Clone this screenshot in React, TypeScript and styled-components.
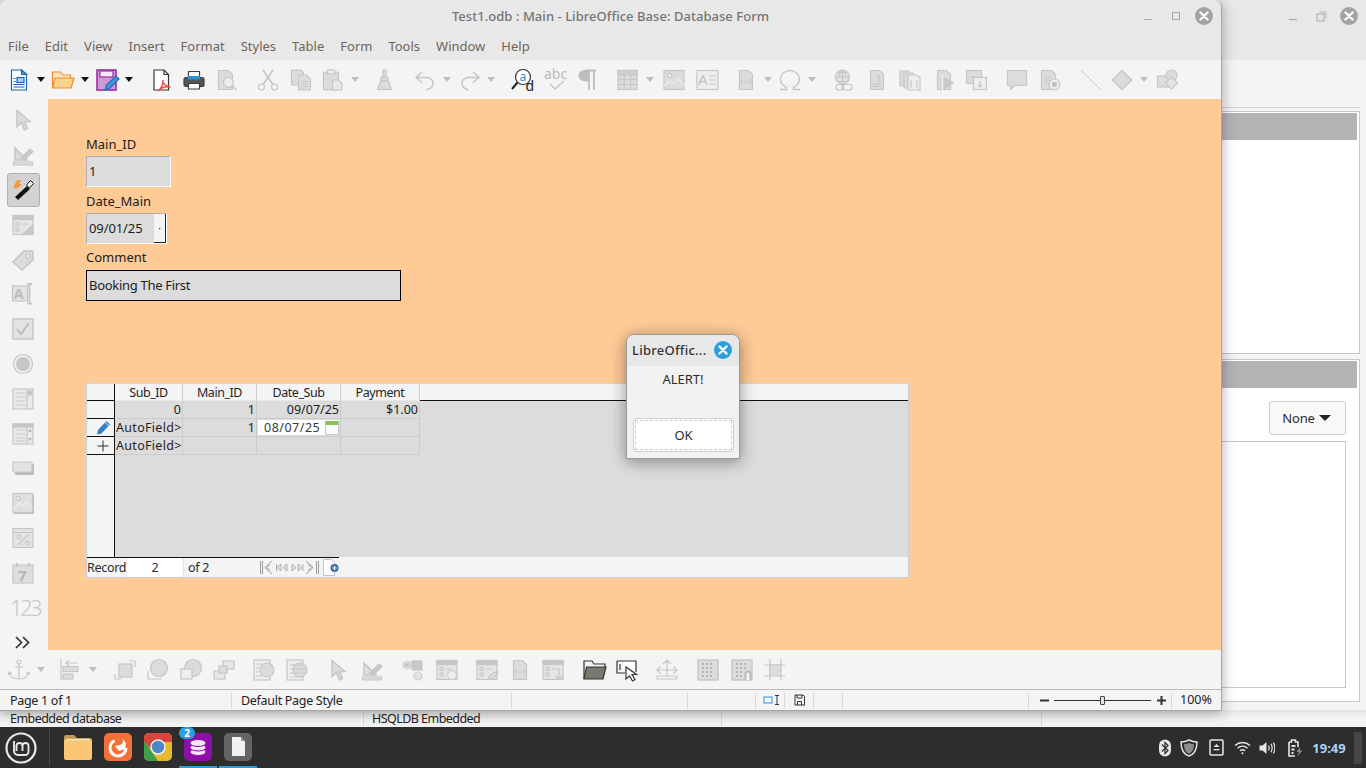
import React from 'react';
import styled, { createGlobalStyle } from 'styled-components';

const UI_FONT = '"Noto Sans", "Open Sans", sans-serif';

const GlobalStyle = createGlobalStyle`
  html, body { margin: 0; height: 100%; overflow: hidden; background: #2d2d2d; }
  body { font: 13px/18px ${UI_FONT}; color: #2b2b2b; }
  * { box-sizing: border-box; }
`;

const Screen = styled.div`
  width: 1366px;
  height: 768px;
  display: flex;
  flex-direction: column;
`;

const Desktop = styled.div`
  position: relative;
  height: 727px;
  flex: none;
`;

/* ---------- windows ---------- */

const BackWindow = styled.div`
  position: absolute;
  inset: 0;
  display: flex;
  flex-direction: column;
  background: #f4f4f4;
`;

const BackHead = styled.div`
  height: 60px;
  flex: none;
  background: #e8e8e8;
  display: flex;
  justify-content: flex-end;
  padding: 7px 8px 0 0;
`;

const BackBody = styled.div`
  flex: 1;
  display: flex;
  justify-content: flex-end;
  padding: 47px 6px 8px 0;
`;

const Sidebar = styled.div`
  width: 300px;
  display: flex;
  flex-direction: column;
  border-top: 1px solid #d0d0d0;
  padding-top: 3px;
  gap: 5px;
`;

const SidePanel = styled.div<{ $grow?: boolean }>`
  border: 1px solid #c8c8c8;
  padding: 1px 2px 2px;
  background: #fff;
  display: flex;
  flex-direction: column;
  height: ${p => (p.$grow ? '343px' : '243px')};
`;

const SideHeader = styled.div`
  height: 27px;
  flex: none;
  background: #b3b3b3;
`;

const NoneRow = styled.div`
  display: flex;
  justify-content: flex-end;
  padding: 13px 11px 6px 0;
`;

const NoneButton = styled.div`
  width: 77px;
  height: 34px;
  border: 1px solid #ccc;
  border-radius: 3px;
  background: #f8f8f8;
  display: flex;
  align-items: center;
  justify-content: center;
  gap: 4px;
  color: #2c2c2c;
  padding-right: 2px;
  padding-bottom: 1px;
  letter-spacing: -0.1px;
`;

const NoneBox = styled.div`
  height: 247px;
  margin-right: 11px;
  border: 1px solid #c8c8c8;
`;

const StatusRow = styled.div<{ $back?: boolean }>`
  height: ${p => (p.$back ? '17px' : '21px')};
  flex: none;
  display: flex;
  align-items: center;
  font-size: 12.5px;
  letter-spacing: ${p => (p.$back ? '-0.55px' : '-0.3px')};
  background: ${p => (p.$back ? 'linear-gradient(#e4e4e4, #f4f4f4 9px)' : '#f4f4f4')};
  border-top: ${p => (p.$back ? 'none' : '1px solid #bcbcbc')};
  color: #222;
`;

const StatusCell = styled.div<{ $w: number; $pl?: number }>`
  width: ${p => p.$w}px;
  height: 15px;
  flex: none;
  display: flex;
  align-items: center;
  padding-left: ${p => p.$pl ?? 9}px;
  border-right: 1px solid #d8d8d8;
  line-height: 15px;
  white-space: nowrap;
`;

const MainWindow = styled.div`
  position: absolute;
  left: 0;
  top: 0;
  width: 1222px;
  height: 711px;
  display: flex;
  flex-direction: column;
  border-radius: 8px 8px 0 0;
  border-right: 1px solid #a6a6a6;
  border-bottom: 1px solid #a6a6a6;
  background: #f4f4f4;
  box-shadow: 0 2px 14px rgba(0, 0, 0, 0.32);
  overflow: hidden;
`;

const TitleBar = styled.div`
  height: 34px;
  flex: none;
  background: #e8e8e8;
  display: flex;
  align-items: center;
  justify-content: center;
  position: relative;
  font-weight: 500;
  color: #757575;
  padding-bottom: 2px;
  letter-spacing: 0.04px;
`;

const WindowControls = styled.div`
  position: absolute;
  right: 8px;
  top: 7px;
  display: flex;
  align-items: center;
`;

const ControlBox = styled.span`
  width: 28px;
  height: 18px;
  display: flex;
  align-items: center;
  justify-content: center;
`;

const CloseDot = styled.span<{ $blue?: boolean }>`
  width: 18px;
  height: 18px;
  margin-left: 5px;
  border-radius: 50%;
  background: ${p => (p.$blue ? '#2a9fe0' : '#a3a3a3')};
  display: flex;
  align-items: center;
  justify-content: center;
`;

const MenuBar = styled.div`
  height: 26px;
  flex: none;
  background: #e8e8e8;
  display: flex;
  align-items: center;
  padding: 0 0 2px 8px;
  gap: 16px;
  color: #6f6457;
  font-size: 13px;
`;

const ToolRow = styled.div<{ $h: number }>`
  height: ${p => p.$h}px;
  flex: none;
  background: #f4f4f4;
  display: flex;
  align-items: center;
`;

const Tool = styled.span<{ $ml: number }>`
  width: 22px;
  height: 22px;
  flex: none;
  margin-left: ${p => p.$ml}px;
  display: flex;
  align-items: center;
  justify-content: center;
`;

const Caret = styled.span<{ $on?: boolean }>`
  width: 0;
  height: 0;
  border-left: 4.5px solid transparent;
  border-right: 4.5px solid transparent;
  border-top: 5px solid ${p => (p.$on ? '#111' : '#bdbdbd')};
`;

const NoneCaret = styled(Caret)`
  border-left-width: 6px;
  border-right-width: 6px;
  border-top-width: 6px;
  border-top-color: #222;
`;

const Icon = styled.svg`
  width: 22px;
  height: 22px;
  fill: none;
  stroke: #c6c6c6;
  stroke-width: 1.2;
  overflow: visible;
  flex: none;
`;

const Work = styled.div`
  flex: 1;
  min-height: 0;
  display: flex;
`;

const LeftBar = styled.div`
  width: 48px;
  flex: none;
  background: #f4f4f4;
  display: flex;
  flex-direction: column;
  align-items: center;
  padding: 4px 2px 0 0;
`;

const SideTool = styled.span<{ $active?: boolean }>`
  width: 33px;
  height: 34.8px;
  flex: none;
  display: flex;
  align-items: center;
  justify-content: center;
  border-radius: 3px;
  border: 1px solid ${p => (p.$active ? '#b0b0b0' : 'transparent')};
  background: ${p => (p.$active ? '#d2d2d2' : 'transparent')};
`;

/* ---------- form ---------- */

const FormCanvas = styled.div`
  flex: 1;
  background: #feca96;
  padding: 36px 0 0 38px;
  display: flex;
  flex-direction: column;
  align-items: flex-start;
  color: #1c1c1c;
`;

const FieldLabel = styled.div<{ $up?: boolean }>`
  height: 18px;
  margin: ${p => (p.$up ? '4px 0 4px' : '5px 0 3px')};
  line-height: 18px;

  &:first-child {
    margin-top: 0;
  }
`;

const Field = styled.div<{ $w: number; $black?: boolean }>`
  width: ${p => p.$w}px;
  height: 31px;
  background: #dcdcdc;
  display: flex;
  align-items: center;
  padding: 0 0 2px 2px;
  border: 1px solid;
  border-color: ${p => (p.$black ? '#000' : '#b0b0b0 #fff #fff #b0b0b0')};
  letter-spacing: ${p => (p.$black ? '-0.3px' : '-0.1px')};
  position: relative;
`;

const SpinButton = styled.span`
  position: absolute;
  right: 0;
  top: 0;
  bottom: 0;
  width: 12px;
  background: #f4f4f4;
  border-right: 1px solid #222;
  border-bottom: 1px solid #222;
  display: flex;
  align-items: center;
  justify-content: center;
  font-size: 10px;
`;

const GridBox = styled.div`
  margin-top: 82px;
  width: 823px;
  height: 195px;
  display: flex;
  flex-direction: column;
  border: 1px solid #c6cedc;
  border-top-color: #d8d8d8;
  background: #f4f4f4;
  font-size: 12.5px;
`;

const GridMain = styled.div`
  height: 173px;
  flex: none;
  display: flex;
`;

const RowHeads = styled.div`
  width: 28px;
  flex: none;
  border-right: 1px solid #111;
  background: #f4f4f4;
`;

const RowHead = styled.div<{ $h: number }>`
  height: ${p => p.$h}px;
  border-bottom: 1px solid #111;
  display: flex;
  align-items: center;
  justify-content: flex-end;
  padding-right: 4px;
`;

const GridData = styled.div`
  flex: 1;
  display: flex;
  flex-direction: column;
  background: #dcdcdc;
`;

const DataRow = styled.div<{ $head?: boolean }>`
  display: flex;
  height: ${p => (p.$head ? 17 : 18)}px;
  flex: none;
`;

const HeadFill = styled.div`
  flex: 1;
  margin-top: auto;
  height: 17px;
  background: #f4f4f4;
  border-bottom: 1px solid #111;
`;

const Cell = styled.div<{ $w: number; $head?: boolean; $left?: boolean }>`
  width: ${p => p.$w}px;
  flex: none;
  display: flex;
  align-items: center;
  justify-content: ${p => (p.$head ? 'center' : p.$left ? 'flex-start' : 'flex-end')};
  padding: 0 1px;
  border-right: 1px solid #cbcbcb;
  border-bottom: 1px solid ${p => (p.$head ? '#e8e8e8' : '#cbcbcb')};
  background: ${p => (p.$head ? '#f4f4f4' : 'transparent')};
  color: #1f1f1f;
  line-height: 17px;
  white-space: nowrap;
  letter-spacing: ${p => (p.$head ? '-0.45px' : p.$left ? '0.3px' : '0')};
`;

const EditCell = styled.div`
  flex: 1;
  align-self: stretch;
  margin: 1px 0;
  background: #fff;
  display: flex;
  align-items: center;
  justify-content: space-between;
  padding: 0 0 0 6px;
  color: #3a3a3a;
  letter-spacing: 0.5px;
`;

const CalendarMark = styled.span`
  width: 14px;
  height: 14px;
  border: 1px solid #c9c9c9;
  border-top: 4px solid #8cc152;
  border-radius: 1px;
  background: #fafafa;
`;

const RecordBar = styled.div`
  flex: 1;
  display: flex;
  background: #f4f4f4;
  color: #2b2b2b;
`;

const RecordLeft = styled.div`
  width: 252px;
  flex: none;
  display: flex;
  align-items: center;
  border-top: 1px solid #111;
`;

const RecordText = styled.span<{ $w: number }>`
  width: ${p => p.$w}px;
  flex: none;
  padding-left: ${p => (p.$w > 50 ? 3 : 0)}px;
  line-height: 18px;
  letter-spacing: -0.3px;
`;

const RecordInput = styled.span`
  width: 57px;
  flex: none;
  height: 19px;
  background: #fff;
  text-align: center;
  border-right: 1px solid #e2e2e2;
  margin-right: 1px;
  line-height: 19px;
`;

/* ---------- dialog ---------- */

const Dialog = styled.div`
  position: absolute;
  left: 626px;
  top: 334px;
  width: 114px;
  height: 125px;
  border-radius: 8px 8px 0 0;
  border: 1px solid #9a9a9a;
  background: #f2f2f2;
  box-shadow: 0 3px 16px rgba(0, 0, 0, 0.4);
  display: flex;
  flex-direction: column;
  overflow: hidden;
`;

const DialogHead = styled.div`
  height: 31px;
  flex: none;
  background: #e8e8e8;
  display: flex;
  align-items: center;
  justify-content: space-between;
  padding: 0 7px 1px 5px;
  font-weight: 500;
  color: #333;
  letter-spacing: 0.25px;
`;

const DialogText = styled.div`
  text-align: center;
  padding-top: 4px;
  height: 52px;
  color: #2c2c2c;
`;

const OkButton = styled.div`
  width: 101px;
  height: 34px;
  margin-left: 6px;
  background: #fff;
  border: 1px solid #cfcfcf;
  border-radius: 3px;
  padding: 1px;
`;

const OkInner = styled.div`
  height: 100%;
  border: 1px dashed #c8c8c8;
  display: flex;
  align-items: center;
  justify-content: center;
  color: #2c2c2c;
  padding-bottom: 1px;
`;

/* ---------- zoom slider ---------- */

const ZoomTrack = styled.span`
  width: 97px;
  height: 1px;
  background: #333;
  position: relative;
  margin: 0 6px 0 5px;
  flex: none;
`;

const ZoomThumb = styled.span`
  position: absolute;
  left: 46px;
  top: -4px;
  width: 5px;
  height: 9px;
  background: #e4e4e4;
  border: 1px solid #444;
  border-radius: 1px;
`;

const ZoomCell = styled.div`
  width: 143px;
  height: 15px;
  flex: none;
  display: flex;
  align-items: center;
  padding-left: 11px;
  border-right: 1px solid #d8d8d8;
`;

const ZoomValue = styled.div`
  flex: 1;
  padding-left: 8px;
  color: #223;
  letter-spacing: 0;
`;

/* ---------- taskbar ---------- */

const Taskbar = styled.div`
  height: 41px;
  flex: none;
  background: #2d2d2d;
  display: flex;
  align-items: center;
  position: relative;
`;

const MintButton = styled.div`
  width: 50px;
  height: 37px;
  flex: none;
  display: flex;
  align-items: center;
  justify-content: center;
  padding-right: 8px;
  border-right: 1px solid #484848;
`;

const Launchers = styled.div`
  display: flex;
  height: 41px;
  margin-left: 8px;
`;

const Launcher = styled.div<{ $active?: boolean }>`
  width: 40px;
  height: 41px;
  position: relative;
  display: flex;
  align-items: center;
  justify-content: center;
  padding-bottom: 2px;

  &::after {
    content: '';
    position: absolute;
    left: 1px;
    right: 1px;
    bottom: 0;
    height: 2px;
    background: ${p => (p.$active ? '#2a9fd6' : 'transparent')};
  }
`;

const Badge = styled.span`
  position: absolute;
  left: 1px;
  top: 0;
  width: 16px;
  height: 12px;
  border-radius: 6px;
  background: #2a9fe0;
  color: #fff;
  font-size: 10px;
  font-weight: 700;
  line-height: 12px;
  text-align: center;
`;

const Tray = styled.div`
  margin-left: auto;
  display: flex;
  align-items: center;
  height: 41px;
  padding-right: 4px;
`;

const TrayIcon = styled.span<{ $w: number }>`
  width: ${p => p.$w}px;
  flex: none;
  display: flex;
  justify-content: center;
`;

const Clock = styled.span`
  width: 40px;
  color: #a9d3f2;
  font-weight: 700;
  font-size: 13px;
  text-align: center;
`;

const TrayEdge = styled.span`
  width: 8px;
  height: 32px;
  margin-left: 5px;
  background: #454545;
`;

/* ---------- icons ---------- */

const F = '#dcdcdc';

const docPath = 'M4.5 1.5h9l4 4v15h-13z';

const icons: Record<string, React.ReactNode> = {
  newDoc: (
    <g stroke="#1a66b3">
      <path d="M3.5 1h10l5 4.5V21h-15z" fill="#fff" />
      <path d="M13.5 1l5 4.5h-5z" fill="#5aa0e0" />
      <rect x="9" y="8.5" width="7" height="5" fill="#a8d0f0" />
      <path d="M5.500 9.500h2M5.500 12.500h2M5.500 15.500h11M5.500 18h11" />
    </g>
  ),
  open: (
    <g stroke="#f0882a">
      <path d="M0.500 19V3h8l2 3h8v4" fill="#fde7c6" />
      <path d="M0.500 19l2.500-10h19l-3 10z" fill="#fbd38d" />
    </g>
  ),
  save: (
    <g>
      <rect x="1" y="1" width="19" height="20" fill="#cc9ad6" stroke="#9c2fa0" strokeWidth="1.600" />
      <rect x="4" y="2" width="13" height="6" fill="#f6ecf7" stroke="#9c2fa0" />
      <path d="M9 21l1.500-5L20 7l3 3-9.500 9.500z" fill="#4a90d9" stroke="#1f6fb5" />
    </g>
  ),
  pdf: (
    <g>
      <path d="M4 1h10l4.500 4.500V21H4z" fill="#fff" stroke="#333" />
      <path d="M14 1v4.500h4.500" stroke="#333" />
      <path d="M8 22c4-3 5.500-8 5-11-.8 3 2 6 7.500 7-4-.6-9 .5-12.500 4z" stroke="#ef4f45" strokeWidth="1.500" />
    </g>
  ),
  print: (
    <g stroke="#3d3d3d">
      <path d="M5.500 2.500h11V9h-11z" fill="#fff" />
      <rect x="1" y="8.500" width="20" height="9" rx="2" fill="#555" />
      <rect x="5" y="7" width="12" height="3.500" fill="#2f8fd0" stroke="none" />
      <path d="M5.500 14.500h11v5.500h-11z" fill="#fff" />
    </g>
  ),
  preview: (
    <g>
      <path d="M2.500 1.500h10l4 4v15h-14z" fill={F} />
      <circle cx="12.500" cy="13.500" r="5" fill="#eee" />
      <path d="M16 17l5 4.500" />
    </g>
  ),
  cut: (
    <g>
      <circle cx="4.500" cy="18" r="3" />
      <circle cx="17.500" cy="18" r="3" />
      <path d="M6 15.500L16 1M16 15.500L6 1" strokeWidth="1.700" />
    </g>
  ),
  copy: (
    <g>
      <path d="M1.500 1h9l3 3v12h-12z" fill={F} />
      <path d="M8.500 6h8l4 4v11h-12z" fill={F} />
      <path d="M11 12.500h7M11 15h7M11 17.500h7" />
    </g>
  ),
  paste: (
    <g>
      <rect x="1.500" y="3" width="15" height="18" rx="1" fill={F} />
      <rect x="5.500" y="1" width="7" height="4" fill="#eee" />
      <path d="M10.500 11h6l3.500 3.500V21h-9.500z" fill="#e8e8e8" />
    </g>
  ),
  brush: (
    <g>
      <path d="M9 1h3v7H9z" fill={F} />
      <path d="M7 8h7v4H7z" fill={F} />
      <path d="M6.500 12h8l3 8.500h-14z" fill={F} />
    </g>
  ),
  undo: <path d="M8 3L2 8.500l6 5M2 8.500h10c5 0 8 3.500 7 7-.7 2.500-3 4.500-6.500 5.500" strokeWidth="1.500" />,
  redo: <path d="M14 3l6 5.500-6 5M20 8.500H10c-5 0-8 3.500-7 7 .7 2.500 3 4.500 6.500 5.500" strokeWidth="1.500" />,
  find: (
    <g>
      <circle cx="11" cy="8" r="7.500" stroke="#333" fill="#fff" />
      <path d="M5.500 13.500L0 20" stroke="#222" strokeWidth="2" />
      <text x="7.500" y="11.500" fontSize="12" fill="#2a94dc" stroke="none" fontFamily={UI_FONT}>a</text>
      <text x="13.500" y="22" fontSize="14" fill="#222" stroke="none" fontFamily={UI_FONT}>d</text>
    </g>
  ),
  spell: (
    <g>
      <text x="-1" y="10" fontSize="14" fill="#bcbcbc" stroke="none" fontFamily={UI_FONT}>abc</text>
      <path d="M5 15l5 5 9-8" strokeWidth="1.500" />
    </g>
  ),
  pilcrow: (
    <g stroke="#bdbdbd">
      <path d="M11 1.500C4 1.500 2 3.500 2 6.500s3 5.500 9 5.500z" fill="#bdbdbd" />
      <path d="M8 1.500h11M12 1.500V21M17 1.500V21" strokeWidth="1.800" />
    </g>
  ),
  table: (
    <g>
      <rect x="1" y="1.500" width="19" height="19" fill={F} />
      <rect x="1" y="1.500" width="19" height="4.500" fill="#cfcfcf" />
      <path d="M7.300 6v14.500M13.600 6v14.500M1 10.500h19M1 15.500h19" />
    </g>
  ),
  image: (
    <g>
      <rect x="1" y="1.500" width="20" height="19" fill={F} />
      <circle cx="6.500" cy="6.500" r="2.200" fill="#eee" />
      <path d="M1 17l5.500-5 4 3 4-5 6.500 6" stroke="#eee" />
    </g>
  ),
  textbox: (
    <g>
      <rect x="1" y="1.500" width="21" height="19" fill="#eee" />
      <text x="2" y="16" fontSize="15" fill="#c2c2c2" stroke="none" fontFamily={UI_FONT}>A</text>
      <path d="M13 7h7M13 11h7M13 15h7" />
    </g>
  ),
  field: (
    <g>
      <path d={docPath} fill={F} />
      <path d="M7 10c-1 1.500-1 4 0 5.500M15 10c1 1.500 1 4 0 5.500M8.500 13h5" />
    </g>
  ),
  omega: <path d="M1 20.500h6.500v-2C3.500 16.500 1.500 13.500 1.500 10a9.500 8.500 0 0 1 19 0c0 3.500-2 6.500-6 8.500v2H21" strokeWidth="1.400" />,
  link: (
    <g>
      <circle cx="10.500" cy="8" r="7" fill="#e0e0e0" />
      <path d="M3.500 8h14M10.500 1v14M5 3.500h11M5 12.500h11M7 8c0-3 1.500-5 3.500-7M14 8c0-3-1.500-5-3.500-7" />
      <rect x="4" y="15.500" width="8" height="5.500" rx="2.700" fill="#f4f4f4" />
      <rect x="10" y="15.500" width="10" height="5.500" rx="2.700" />
    </g>
  ),
  footnote: (
    <g>
      <path d={docPath} fill={F} />
      <text x="10" y="13" fontSize="9" fill="#bbb" stroke="none" fontFamily={UI_FONT}>1</text>
      <path d="M7 15h8M7 17.500h8" />
    </g>
  ),
  pages: (
    <g>
      <path d="M1 2h9v15H1z" fill={F} />
      <path d="M5 4h9v15H5z" fill={F} />
      <path d="M9 6h9l3 3v12H9z" fill="#eee" />
      <path d="M13 12h-1v6h1M17 12h1v6h-1" />
    </g>
  ),
  play: (
    <g>
      <path d={docPath} fill={F} />
      <path d="M9 7v14" stroke="#f4f4f4" strokeWidth="3" />
      <path d="M8 8v14M11 8v13" />
      <path d="M12 9l8 5-8 5z" fill="#c9c9c9" />
    </g>
  ),
  cross: (
    <g>
      <rect x="0.500" y="1.500" width="15" height="13" fill={F} />
      <rect x="7.500" y="8.500" width="13" height="12" fill="#eee" />
      <path d="M2.500 8h7M14 12v6M12 16l2 2 2-2" />
    </g>
  ),
  comment: <path d="M1.500 1.500h19v15H9l-4.500 4v-4h-3z" fill={F} />,
  record: (
    <g>
      <path d="M2.500 1.500h10l4 4v15h-14z" fill={F} />
      <path d="M5 8h7M5 11h6M5 14h5" />
      <circle cx="15.500" cy="15.500" r="5.500" fill="#eee" />
      <circle cx="15.500" cy="15.500" r="2.200" fill="#bbb" />
    </g>
  ),
  line: <path d="M1 1l20 20" strokeWidth="1" />,
  diamond: <path d="M11 1.500L20.500 11 11 20.500 1.500 11z" fill={F} strokeWidth="1.500" />,
  shapes: (
    <g>
      <rect x="0.500" y="7" width="11" height="11" fill={F} />
      <circle cx="14.500" cy="6.500" r="5.500" fill={F} />
      <path d="M14.500 8l6 6-6 6-6-6z" fill="#e4e4e4" />
    </g>
  ),
  pointer: <path d="M5 1.500v16l4.500-4 3 7.500 3-1.500-3-6.500 5.500-.5z" fill={F} strokeWidth="1.500" />,
  design: (
    <g>
      <path d="M3 4l12 12H3z" fill={F} strokeWidth="1.500" />
      <path d="M9 14l9-9 3 2.500-8.500 8.500z" fill="#c8c8c8" />
      <path d="M1.500 18h19v3h-19z" fill={F} />
    </g>
  ),
  wand: (
    <g stroke="none">
      <path d="M1 9l4-8h4L7 5h3L4 11l1-2z" fill="#f29a3c" />
      <path d="M3 18L15 7l3 3L6 21z" fill="#111" />
      <path d="M14.500 6l4-4.500 3 3-4 4.500z" fill="#f4f4f4" stroke="#111" strokeWidth="1" />
    </g>
  ),
  formProps: (
    <g>
      <rect x="1" y="1.500" width="20" height="19" fill="#e6e6e6" />
      <rect x="1" y="1.500" width="20" height="4" fill="#c6c6c6" />
      <path d="M4 8.500h3v3H4zM4 14h3v3H4zM10 10h6" />
      <path d="M21 11v9.500H10.500z" fill="#c9c9c9" />
    </g>
  ),
  tag: (
    <g>
      <path d="M1 13L12 2h9v9L10 21z" fill={F} strokeWidth="1.500" />
      <circle cx="16" cy="7" r="2" fill="#f4f4f4" />
    </g>
  ),
  aiBox: (
    <g>
      <rect x="0.500" y="3" width="15" height="15" fill="#e4e4e4" />
      <text x="1.500" y="16" fontSize="15" fontWeight="700" fill="#bdbdbd" stroke="none" fontFamily={UI_FONT}>A</text>
      <path d="M15 1h5M15 20.500h5M17.500 1v19.500" strokeWidth="1.800" />
    </g>
  ),
  check: (
    <g>
      <rect x="1" y="1" width="20" height="20" fill="#e4e4e4" strokeWidth="1.500" />
      <path d="M5 11l4 5 8-11" strokeWidth="2" stroke="#bdbdbd" />
    </g>
  ),
  radio: (
    <g>
      <circle cx="11" cy="11" r="9.500" fill="#eee" />
      <circle cx="11" cy="11" r="7" fill="#c6c6c6" stroke="none" />
    </g>
  ),
  list: (
    <g>
      <rect x="1" y="1" width="20" height="20" fill="#eaeaea" />
      <path d="M3.500 5h10M3.500 9h10M3.500 13h10M3.500 17h10" />
      <path d="M15 1v20" />
      <path d="M16 3h4v4h-4z" fill="#c6c6c6" />
    </g>
  ),
  spinList: (
    <g>
      <rect x="1" y="1" width="20" height="20" fill="#eaeaea" />
      <rect x="1" y="1" width="20" height="3" fill="#c6c6c6" />
      <path d="M3.500 7h10M3.500 11h10M3.500 15h10M3.500 18h10M15 4v17" />
      <path d="M18 6l2 3h-4zM18 18l2-3h-4z" fill="#bbb" stroke="none" />
    </g>
  ),
  button: (
    <g>
      <rect x="3" y="7" width="19" height="11" rx="1" fill="#bcbcbc" stroke="none" />
      <rect x="1" y="5" width="19" height="10" rx="1" fill="#e4e4e4" />
    </g>
  ),
  imageBtn: (
    <g>
      <rect x="2" y="3" width="20" height="19" fill="#bcbcbc" stroke="none" />
      <rect x="1" y="1.500" width="19.500" height="19" fill="#e0e0e0" />
      <circle cx="6" cy="6.500" r="2" fill="#eee" />
      <path d="M1 17l6-6 4 3 4-4 5.500 6" stroke="#eee" />
    </g>
  ),
  percent: (
    <g>
      <rect x="1" y="1.500" width="20" height="19" fill="#e4e4e4" />
      <path d="M1 5.500h20M6 18l10-10" />
      <circle cx="7" cy="10" r="1.800" />
      <circle cx="15.500" cy="16" r="1.800" />
    </g>
  ),
  calendar: (
    <g>
      <rect x="1" y="3" width="20" height="18" fill="#dedede" />
      <path d="M5 1v4M17 1v4" strokeWidth="2" />
      <text x="6" y="18.500" fontSize="15" fontWeight="700" fill="#b5b5b5" stroke="none" fontFamily={UI_FONT}>7</text>
    </g>
  ),
  numeric: <text x="-2" y="19" fontSize="22" letterSpacing="-2.500" fill="#c8c8c8" stroke="none" fontFamily={UI_FONT} fontWeight="300">123</text>,
  more: <path d="M4 6l5.500 5.500L4 17M11 6l5.500 5.500L11 17" stroke="#333" strokeWidth="1.700" />,
  anchor: (
    <g>
      <circle cx="11" cy="3" r="2" />
      <path d="M11 5v15M7 8h8M1 13c1 5 5 7 10 7s9-2 10-7M1 13l-.5 3M1 13l3 1.500M21 13l.5 3M21 13l-3 1.500" />
    </g>
  ),
  align: (
    <g>
      <path d="M2 0v21" />
      <path d="M10 1l-3 3 3 3M7 4h11" />
      <rect x="4" y="7.500" width="15" height="5" fill={F} />
      <rect x="4" y="15" width="10" height="5" fill={F} />
    </g>
  ),
  front: (
    <g>
      <path d="M1 15v5h6M15 2h6v6" />
      <rect x="5" y="5" width="13" height="13" fill={F} />
    </g>
  ),
  forward: (
    <g>
      <path d="M1 12v8h14" />
      <circle cx="12" cy="9" r="8.500" fill={F} />
    </g>
  ),
  backward: (
    <g>
      <circle cx="13" cy="9" r="8.500" fill={F} />
      <rect x="1" y="10" width="11" height="10" fill="#eee" />
    </g>
  ),
  blocks: (
    <g>
      <rect x="1" y="12" width="11" height="8" fill="#e8e8e8" />
      <rect x="10" y="2" width="11" height="8" fill="#e8e8e8" />
      <rect x="6" y="7" width="8" height="7" fill={F} />
    </g>
  ),
  wrapL: (
    <g>
      <rect x="1" y="1" width="16" height="20" fill="#eee" />
      <circle cx="14" cy="11" r="7" fill={F} />
      <path d="M3 5h6M3 9h3M3 13h3M3 17h6" />
    </g>
  ),
  wrapR: (
    <g>
      <rect x="1" y="1" width="16" height="20" fill="#eee" />
      <circle cx="14" cy="11" r="7" fill={F} />
      <path d="M4 6h13M4 10h16M4 14h16M4 18h11" />
    </g>
  ),
  tabOrder: (
    <g>
      <rect x="1" y="1.500" width="20" height="19" fill="#e6e6e6" />
      <rect x="1" y="1.500" width="20" height="4" fill="#c6c6c6" />
      <path d="M4 8.500h3v3H4zM4 14h3v3H4zM10 10h6" />
      <circle cx="16" cy="16" r="4.500" fill="#eee" strokeDasharray="2 1" />
    </g>
  ),
  dots: (
    <g>
      <circle cx="5" cy="6" r="3.500" fill="#e8e8e8" />
      <circle cx="5" cy="6" r="1.500" fill="#bbb" />
      <rect x="10" y="2" width="10" height="9" fill="#c8c8c8" />
      <circle cx="16" cy="17" r="4" fill="#e4e4e4" strokeDasharray="2 1" />
    </g>
  ),
  eyeForm: (
    <g>
      <rect x="1" y="1.500" width="20" height="19" fill="#e6e6e6" />
      <rect x="1" y="1.500" width="20" height="4" fill="#c6c6c6" />
      <path d="M4 8.500h3v3H4zM4 14h3v3H4zM10 10h6" />
      <path d="M12 20c2-5 6-7 10-7-1 4-5 8-10 7z" fill="#ddd" />
    </g>
  ),
  downForm: (
    <g>
      <rect x="1" y="1.500" width="20" height="19" fill="#e6e6e6" />
      <rect x="1" y="1.500" width="20" height="4" fill="#c6c6c6" />
      <path d="M4 8.500h3v3H4zM4 14h3v3H4zM10 10h6M17 9v11M13.500 17l3.500 3.500 3.500-3.500" />
    </g>
  ),
  folderDark: (
    <g stroke="#333">
      <path d="M1 20V2h8l2 3h11v3" fill="#f4f4f4" strokeWidth="1.200" />
      <path d="M1 20L3.500 8H23l-3 12z" fill="#7a7870" strokeWidth="1.200" />
    </g>
  ),
  selectBox: (
    <g stroke="#333">
      <path d="M1 2h19v11" fill="#fff" />
      <path d="M1 2v12h8" fill="none" />
      <path d="M4 5v6" />
      <path d="M10 8v12l3.500-3 3 5 2.500-1.500-3-5h4.500z" fill="#fff" />
    </g>
  ),
  move: <path d="M11 1v15M7 5l4-4 4 4M1 11h20M4.500 7.500L1 11l3.500 3.500M17.500 7.500L21 11l-3.500 3.500M1 17h20v3H1z" />,
  gridPlain: (
    <g>
      <rect x="1" y="1" width="20" height="20" fill="#dcdcdc" strokeWidth="1.400" />
      <path d="M5 5h12M5 9h12M5 13h12M5 17h12" stroke="#a8a8a8" strokeDasharray="2 2" strokeWidth="1.600" />
    </g>
  ),
  gridSnap: (
    <g>
      <rect x="1" y="1" width="20" height="20" fill="#dcdcdc" strokeWidth="1.400" />
      <path d="M5 5h12M5 9h12M5 13h6M5 17h6" stroke="#a8a8a8" strokeDasharray="2 2" strokeWidth="1.600" />
      <path d="M14.500 21v-6a2.500 2.500 0 0 1 5 0v6" stroke="#bbb" strokeWidth="2" fill="#f4f4f4" />
    </g>
  ),
  helpLines: (
    <g>
      <rect x="5" y="5" width="12" height="12" fill={F} stroke="none" />
      <path d="M6 0v21M17 0v21M0 6h21M0 17h21" />
    </g>
  ),
};

type ToolSpec = [number, string];

const TOP_TOOLS: ToolSpec[] = [
  [19, 'newDoc'], [41, '^'], [63, 'open'], [85, '^'], [107, 'save'], [129, '^'], [161, 'pdf'],
  [194, 'print'], [227, 'preview'], [268, 'cut'], [301, 'copy'], [333, 'paste'], [355, 'v'],
  [385, 'brush'], [425, 'undo'], [447, 'v'], [470, 'redo'], [491, 'v'], [523, 'find'], [556, 'spell'],
  [588, 'pilcrow'], [628, 'table'], [650, 'v'], [674, 'image'], [707, 'textbox'], [746, 'field'],
  [768, 'v'], [790, 'omega'], [812, 'v'], [843, 'link'], [877, 'footnote'], [910, 'pages'],
  [944, 'play'], [977, 'cross'], [1017, 'comment'], [1050, 'record'], [1091, 'line'], [1122, 'diamond'],
  [1144, 'v'], [1168, 'shapes'],
];

const BOTTOM_TOOLS: ToolSpec[] = [
  [19, 'anchor'], [41, 'v'], [70, 'align'], [93, 'v'], [125, 'front'], [158, 'forward'], [191, 'backward'],
  [224, 'blocks'], [264, 'wrapL'], [297, 'wrapR'], [338, 'pointer'], [372, 'design'], [413, 'dots'],
  [447, 'tabOrder'], [487, 'eyeForm'], [520, 'field'], [553, 'downForm'], [594, 'folderDark'],
  [627, 'selectBox'], [667, 'move'], [708, 'gridPlain'], [742, 'gridSnap'], [775, 'helpLines'],
];

const LEFT_TOOLS = [
  'pointer', 'design', 'wand', 'formProps', 'tag', 'aiBox', 'check', 'radio', 'list', 'spinList',
  'button', 'imageBtn', 'percent', 'calendar', 'numeric', 'more',
];

const MENU = ['File', 'Edit', 'View', 'Insert', 'Format', 'Styles', 'Table', 'Form', 'Tools', 'Window', 'Help'];

const Glyph = ({ name }: { name: string }) => <Icon viewBox="0 0 22 22">{icons[name]}</Icon>;

const Toolbar = ({ tools, height }: { tools: ToolSpec[]; height: number }) => (
  <ToolRow $h={height}>
    {tools.map(([x, name], i) => {
      const ml = i === 0 ? x - 11 : x - tools[i - 1][0] - 22;
      return (
        <Tool key={x} $ml={ml}>
          {name === '^' ? <Caret $on /> : name === 'v' ? <Caret /> : <Glyph name={name} />}
        </Tool>
      );
    })}
  </ToolRow>
);

const XMark = () => (
  <svg width="10" height="10" viewBox="0 0 10 10">
    <path d="M1.500 1.500l7 7M8.500 1.500l-7 7" stroke="#fff" strokeWidth="2.400" strokeLinecap="round" />
  </svg>
);

const MinMark = () => (
  <svg width="10" height="10" viewBox="0 0 10 10">
    <path d="M1 8.500h8" stroke="#a8a8a8" strokeWidth="1.200" />
  </svg>
);

const MaxMark = () => (
  <svg width="10" height="10" viewBox="0 0 10 10">
    <rect x="1.500" y="1.500" width="7" height="7" fill="none" stroke="#a8a8a8" />
  </svg>
);

const RestoreMark = () => (
  <svg width="11" height="11" viewBox="0 0 11 11">
    <rect x="1" y="3" width="7" height="7" fill="none" stroke="#a8a8a8" />
    <path d="M3.500 1h6.500v6.500" fill="none" stroke="#b8b8b8" />
  </svg>
);

const NavIcons = () => (
  <svg width="79" height="17" viewBox="0 0 79 17">
    <g fill="none" stroke="#9a9a9a" strokeWidth="1">
      <path d="M0.500 2v13M2.500 2v13M12 2L5 8.500l7 6.500M10 5.500L7 8.500l3 3" />
      <path d="M46 2l7 6.500-7 6.500M48 5.500l3 3-3 3M56.500 2v13M58.500 2v13" />
    </g>
    <g fill="#e4e4e4" stroke="#b0b0b0" strokeWidth="1">
      <path d="M16.500 5v7M21 5l-4 3.500 4 3.500zM27 5l-4 3.500 4 3.500z" />
      <path d="M32 5l4 3.500-4 3.500zM38 5l4 3.500-4 3.500zM43 5v7" />
    </g>
    <path d="M63.500 0.500h8l3 3v13h-11z" stroke="#c4c4c4" fill="#fff" />
    <circle cx="74.500" cy="9" r="4" fill="#2f6db5" />
    <path d="M72.300 9h4.400M74.500 6.800v4.400" stroke="#fff" strokeWidth="1.200" />
  </svg>
);

const MintLogo = () => (
  <svg width="32" height="32" viewBox="0 0 32 32" fill="none" stroke="#e8e8e8">
    <circle cx="16" cy="16" r="14.500" strokeWidth="2.200" />
    <path d="M9 9v10a4 4 0 0 0 4 4h7a3.500 3.500 0 0 0 3.500-3.500V14a3 3 0 0 0-6 0v5M17.500 14a3 3 0 0 0-6 0v5" strokeWidth="1.900" />
  </svg>
);

const App = () => (
  <Screen>
    <GlobalStyle />
    <Desktop>
      <BackWindow>
        <BackHead>
          <ControlBox><MinMark /></ControlBox>
          <ControlBox><RestoreMark /></ControlBox>
          <CloseDot><XMark /></CloseDot>
        </BackHead>
        <BackBody>
          <Sidebar>
            <SidePanel>
              <SideHeader />
            </SidePanel>
            <SidePanel $grow>
              <SideHeader />
              <NoneRow>
                <NoneButton>
                  None
                  <NoneCaret />
                </NoneButton>
              </NoneRow>
              <NoneBox />
            </SidePanel>
          </Sidebar>
        </BackBody>
        <StatusRow $back>
          <StatusCell $w={364} $pl={10}>Embedded database</StatusCell>
          <StatusCell $w={358} $pl={8}>HSQLDB Embedded</StatusCell>
          <StatusCell $w={320} />
        </StatusRow>
      </BackWindow>

      <MainWindow>
        <TitleBar>
          Test1.odb : Main - LibreOffice Base: Database Form
          <WindowControls>
            <ControlBox><MinMark /></ControlBox>
            <ControlBox><MaxMark /></ControlBox>
            <CloseDot><XMark /></CloseDot>
          </WindowControls>
        </TitleBar>
        <MenuBar>
          {MENU.map(m => (
            <span key={m}>{m}</span>
          ))}
        </MenuBar>
        <Toolbar tools={TOP_TOOLS} height={39} />
        <Work>
          <LeftBar>
            {LEFT_TOOLS.map(name => (
              <SideTool key={name} $active={name === 'wand'}>
                <Glyph name={name} />
              </SideTool>
            ))}
          </LeftBar>
          <FormCanvas>
            <FieldLabel>Main_ID</FieldLabel>
            <Field $w={85}>1</Field>
            <FieldLabel>Date_Main</FieldLabel>
            <Field $w={81}>
              09/01/25
              <SpinButton>·</SpinButton>
            </Field>
            <FieldLabel $up>Comment</FieldLabel>
            <Field $w={315} $black>Booking The First</Field>
            <GridBox>
              <GridMain>
                <RowHeads>
                  <RowHead $h={17} />
                  <RowHead $h={18} />
                  <RowHead $h={18}>
                    <svg width="14" height="14" viewBox="0 0 14 14">
                      <path d="M1 13.500l1-4.500 7-7.500 3.500 3.500-7 7.500z" fill="#2f7fc8" />
                      <path d="M10 .5l3.500 3.500" stroke="#2f7fc8" strokeWidth="1.400" />
                    </svg>
                  </RowHead>
                  <RowHead $h={18}>
                    <svg width="14" height="14" viewBox="0 0 14 14">
                      <path d="M7 1.500v11M1.500 7h11" stroke="#333" strokeWidth="1" />
                    </svg>
                  </RowHead>
                </RowHeads>
                <GridData>
                  <DataRow $head>
                    <Cell $w={68} $head>Sub_ID</Cell>
                    <Cell $w={74} $head>Main_ID</Cell>
                    <Cell $w={84} $head>Date_Sub</Cell>
                    <Cell $w={79} $head>Payment</Cell>
                    <HeadFill />
                  </DataRow>
                  <DataRow>
                    <Cell $w={68}>0</Cell>
                    <Cell $w={74}>1</Cell>
                    <Cell $w={84}>09/07/25</Cell>
                    <Cell $w={79}>$1.00</Cell>
                  </DataRow>
                  <DataRow>
                    <Cell $w={68} $left>AutoField&gt;</Cell>
                    <Cell $w={74}>1</Cell>
                    <Cell $w={84}>
                      <EditCell>
                        08/07/25
                        <CalendarMark />
                      </EditCell>
                    </Cell>
                    <Cell $w={79} />
                  </DataRow>
                  <DataRow>
                    <Cell $w={68} $left>AutoField&gt;</Cell>
                    <Cell $w={74} />
                    <Cell $w={84} />
                    <Cell $w={79} />
                  </DataRow>
                </GridData>
              </GridMain>
              <RecordBar>
                <RecordLeft>
                  <RecordText $w={40}>Record</RecordText>
                  <RecordInput>2</RecordInput>
                  <RecordText $w={75}>of 2</RecordText>
                  <NavIcons />
                </RecordLeft>
              </RecordBar>
            </GridBox>
          </FormCanvas>
        </Work>
        <Toolbar tools={BOTTOM_TOOLS} height={39} />
        <StatusRow>
          <StatusCell $w={232} $pl={10}>Page 1 of 1</StatusCell>
          <StatusCell $w={280}>Default Page Style</StatusCell>
          <StatusCell $w={176} />
          <StatusCell $w={68} />
          <StatusCell $w={29} $pl={0}>
            <svg width="28" height="14" viewBox="0 0 28 14" fill="none">
              <rect x="8" y="4" width="8" height="6" stroke="#2a94dc" />
              <path d="M19 2.500h4M21 2.500v9M19 11.500h4" stroke="#333" />
            </svg>
          </StatusCell>
          <StatusCell $w={29} $pl={0}>
            <svg width="28" height="14" viewBox="0 0 28 14" fill="none" stroke="#333">
              <path d="M10 2h8l1.500 1.500V12h-9.500z" />
              <path d="M12 2v3h5V2M12.500 12V8.500h4V12" />
            </svg>
          </StatusCell>
          <StatusCell $w={29} />
          <StatusCell $w={186} />
          <ZoomCell>
            <svg width="9" height="9" viewBox="0 0 9 9">
              <path d="M0 4.500h9" stroke="#333" strokeWidth="2" />
            </svg>
            <ZoomTrack>
              <ZoomThumb />
            </ZoomTrack>
            <svg width="9" height="9" viewBox="0 0 9 9">
              <path d="M0 4.500h9M4.500 0v9" stroke="#333" strokeWidth="2" />
            </svg>
          </ZoomCell>
          <ZoomValue>100%</ZoomValue>
        </StatusRow>
      </MainWindow>

      <Dialog>
        <DialogHead>
          LibreOffic...
          <CloseDot $blue><XMark /></CloseDot>
        </DialogHead>
        <DialogText>ALERT!</DialogText>
        <OkButton>
          <OkInner>OK</OkInner>
        </OkButton>
      </Dialog>
    </Desktop>

    <Taskbar>
      <MintButton>
        <MintLogo />
      </MintButton>
      <Launchers>
        <Launcher>
          <svg width="30" height="28" viewBox="0 0 30 28">
            <path d="M1 4a2 2 0 0 1 2-2h8l3 3h13a2 2 0 0 1 2 2v3H1z" fill="#c99a50" />
            <path d="M1 7h28v18a2 2 0 0 1-2 2H3a2 2 0 0 1-2-2z" fill="#fac772" />
            <path d="M3 6.500h24" stroke="#f4ead8" strokeWidth="1.200" />
          </svg>
        </Launcher>
        <Launcher>
          <svg width="28" height="28" viewBox="0 0 28 28">
            <rect width="28" height="28" rx="5" fill="#f2703a" />
            <circle cx="14" cy="15" r="8" fill="none" stroke="#fff" strokeWidth="3" strokeDasharray="34 16" />
            <path d="M18 5c2 3 1 6-2 7l-5 1 4 5 6-2 1-6z" fill="#fff" />
          </svg>
        </Launcher>
        <Launcher>
          <svg width="28" height="28" viewBox="0 0 28 28">
            <rect width="28" height="28" rx="5" fill="#e8b92c" />
            <path d="M5 0h18a5 5 0 0 1 5 5v4H14L7 16 0 9V5a5 5 0 0 1 5-5z" fill="#d8453a" />
            <path d="M0 8l8 11 6 9H5a5 5 0 0 1-5-5z" fill="#3f9f4a" />
            <circle cx="14" cy="14" r="7" fill="#4a86c8" stroke="#eee" strokeWidth="1.600" />
          </svg>
        </Launcher>
        <Launcher $active>
          <svg width="28" height="28" viewBox="0 0 28 28">
            <rect width="28" height="28" rx="5" fill="#8e0fa8" />
            <g fill="#f4e6f6" stroke="#8e0fa8" strokeWidth="1">
              <ellipse cx="14" cy="19" rx="8" ry="3.500" />
              <ellipse cx="14" cy="14.500" rx="8" ry="3.500" />
              <ellipse cx="14" cy="10" rx="8" ry="3.500" />
            </g>
          </svg>
          <Badge>2</Badge>
        </Launcher>
        <Launcher $active>
          <svg width="28" height="28" viewBox="0 0 28 28">
            <rect width="28" height="28" rx="5" fill="#646464" />
            <path d="M8 4h8.500L21 8.500V23H8z" fill="#f2f2f2" />
            <path d="M17 4l4 4h-4z" fill="#9a9a9a" />
          </svg>
        </Launcher>
      </Launchers>
      <Tray>
        <TrayIcon $w={24}>
          <svg width="14" height="18" viewBox="0 0 14 18">
            <rect x="1" y="0.500" width="12" height="17" rx="6" fill="#e6e6e6" />
            <path d="M4 5.500l6 6-3 3v-11l3 3-6 6" fill="none" stroke="#2d2d2d" strokeWidth="1.200" />
          </svg>
        </TrayIcon>
        <TrayIcon $w={24}>
          <svg width="18" height="18" viewBox="0 0 18 18">
            <path d="M9 1c3 1.500 5 2 8 2 0 6-2 12-8 14C3 15 1 9 1 3c3 0 5-.5 8-2z" fill="none" stroke="#e6e6e6" strokeWidth="1.500" />
            <path d="M9 4c2 1 3.500 1 5 1.300 0 4-1.500 8-5 9.500-3.500-1.500-5-5.500-5-9.500C5.500 5 7 5 9 4z" fill="#8c8c8c" />
          </svg>
        </TrayIcon>
        <TrayIcon $w={30}>
          <svg width="15" height="17" viewBox="0 0 15 17">
            <rect x="1" y="1" width="13" height="15" rx="1" fill="none" stroke="#e6e6e6" strokeWidth="1.500" />
            <path d="M7.500 5l3 3h-6zM4.500 10h6v1.200h-6z" fill="#e6e6e6" />
          </svg>
        </TrayIcon>
        <TrayIcon $w={22}>
          <svg width="17" height="14" viewBox="0 0 17 14" fill="none" stroke="#e6e6e6" strokeWidth="1.500">
            <path d="M1 4.500c4.500-4 10.500-4 15 0M3.500 7.200c3-2.700 7-2.700 10 0M6 9.800c1.500-1.300 3.500-1.300 5 0" />
            <circle cx="8.500" cy="12.300" r="1" fill="#e6e6e6" stroke="none" />
          </svg>
        </TrayIcon>
        <TrayIcon $w={28}>
          <svg width="16" height="14" viewBox="0 0 16 14" fill="none">
            <path d="M0.500 4.500h3L7.500 1v12L3.500 9.500h-3z" fill="#e6e6e6" />
            <path d="M9.500 4.500c.8 1.500.8 3.500 0 5M12 2.800c1.400 2.600 1.400 5.800 0 8.400M14.400 1.500c1.800 3.400 1.800 7.600 0 11" stroke="#e6e6e6" strokeWidth="1.200" />
          </svg>
        </TrayIcon>
        <TrayIcon $w={28}>
          <svg width="16" height="18" viewBox="0 0 16 18" fill="none">
            <path d="M2 3h2.500V1h4v2H11v5M8 17H2V3" stroke="#e6e6e6" strokeWidth="1.600" />
            <path d="M4.500 6h4v2h-4zM4.500 9.500h3v2h-3zM4.500 13h2v2h-2z" fill="#e6e6e6" />
            <path d="M13 8l-3.500 5h2.500L10 17.500l5.500-6h-2.500z" fill="#8a8a8a" />
          </svg>
        </TrayIcon>
        <Clock>19:49</Clock>
        <TrayEdge />
      </Tray>
    </Taskbar>
  </Screen>
);

export default App;
